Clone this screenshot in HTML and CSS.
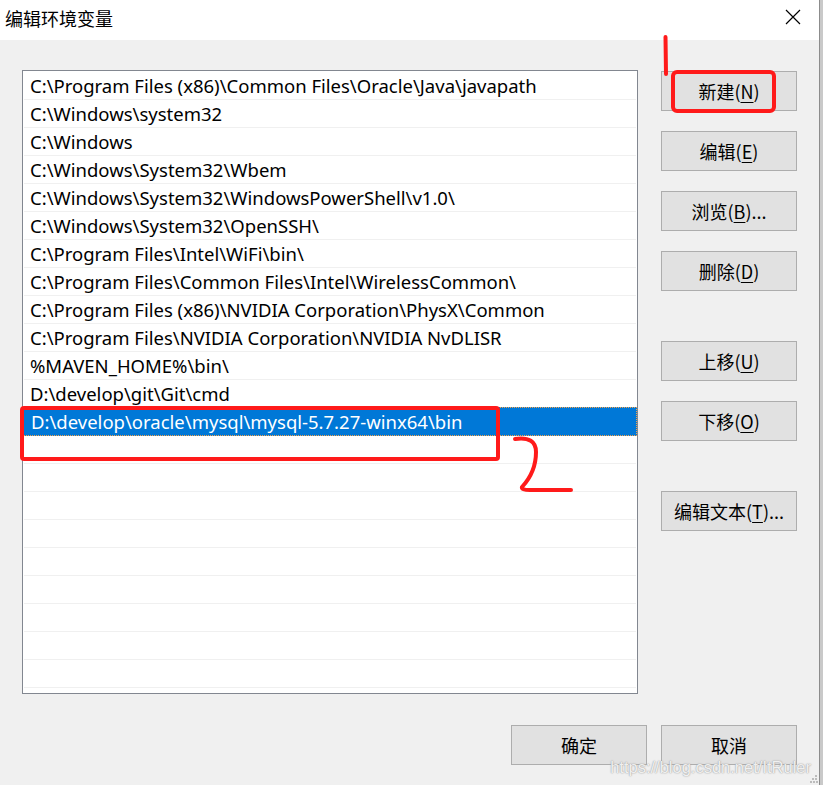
FILE: index.html
```html
<!DOCTYPE html>
<html lang="zh-CN">
<head>
<meta charset="utf-8">
<title>编辑环境变量</title>
<link rel="stylesheet" href="styles.css">
</head>
<body>
<div class="screen">
  <div class="dialog">
    <div class="titlebar">
      <span class="title">编辑环境变量</span>
      <span class="close">
        <svg width="16" height="16" viewBox="0 0 16 16"><path d="M1 1L15 15M15 1L1 15" stroke="#000" stroke-width="1.2" fill="none"/></svg>
      </span>
    </div>
    <div class="body">
      <div class="main">
        <div class="listbox">
          <div class="row">C:\Program Files (x86)\Common Files\Oracle\Java\javapath</div>
          <div class="row">C:\Windows\system32</div>
          <div class="row">C:\Windows</div>
          <div class="row">C:\Windows\System32\Wbem</div>
          <div class="row">C:\Windows\System32\WindowsPowerShell\v1.0\</div>
          <div class="row">C:\Windows\System32\OpenSSH\</div>
          <div class="row">C:\Program Files\Intel\WiFi\bin\</div>
          <div class="row">C:\Program Files\Common Files\Intel\WirelessCommon\</div>
          <div class="row">C:\Program Files (x86)\NVIDIA Corporation\PhysX\Common</div>
          <div class="row">C:\Program Files\NVIDIA Corporation\NVIDIA NvDLISR</div>
          <div class="row">%MAVEN_HOME%\bin\</div>
          <div class="row">D:\develop\git\Git\cmd</div>
          <div class="row selected">D:\develop\oracle\mysql\mysql-5.7.27-winx64\bin</div>
          <div class="row"></div>
          <div class="row"></div>
          <div class="row"></div>
          <div class="row"></div>
          <div class="row"></div>
          <div class="row"></div>
          <div class="row"></div>
          <div class="row"></div>
          <div class="row"></div>
        </div>
        <div class="side">
          <button class="btn">新建(<u>N</u>)</button>
          <button class="btn">编辑(<u>E</u>)</button>
          <button class="btn">浏览(<u>B</u>)...</button>
          <button class="btn">删除(<u>D</u>)</button>
          <button class="btn group">上移(<u>U</u>)</button>
          <button class="btn">下移(<u>O</u>)</button>
          <button class="btn group2">编辑文本(<u>T</u>)...</button>
        </div>
      </div>
      <div class="footer">
        <button class="btn">确定</button>
        <button class="btn">取消</button>
      </div>
      <div class="watermark">https://blog.csdn.net/ItRuler</div>
      <svg class="grip" width="8" height="8" viewBox="0 0 8 8">
        <rect x="5" y="0" width="2" height="2" fill="#bcbcbc"/>
        <rect x="2" y="3" width="2" height="2" fill="#bcbcbc"/>
        <rect x="5" y="3" width="2" height="2" fill="#bcbcbc"/>
        <rect x="0" y="6" width="2" height="2" fill="#bcbcbc"/>
        <rect x="3" y="6" width="2" height="2" fill="#bcbcbc"/>
        <rect x="6" y="6" width="2" height="2" fill="#bcbcbc"/>
      </svg>
    </div>
    <svg class="annot" width="819" height="785" viewBox="0 0 819 785">
      <path d="M665.5 37 L666 74" stroke="#ff1a1a" stroke-width="4" stroke-linecap="round" fill="none"/>
      <rect x="673" y="72" width="101" height="39" rx="4" ry="4" stroke="#ff1a1a" stroke-width="4" fill="none"/>
      <rect x="22" y="408" width="476" height="51" rx="2" ry="2" stroke="#ff1a1a" stroke-width="4" fill="none"/>
      <path d="M515 439 Q536 436 536 452 Q536 472 522 487 Q521 490 530 490 L571 490" stroke="#ff1a1a" stroke-width="4" stroke-linecap="round" stroke-linejoin="round" fill="none"/>
    </svg>
  </div>
  <div class="behind"></div>
</div>
</body>
</html>
```
FILE: styles.css
```css
html, body {
  margin: 0;
  padding: 0;
  background: #f0f0f0;
}
.screen {
  display: flex;
  width: 823px;
  height: 785px;
  overflow: hidden;
}
.dialog {
  position: relative;
  width: 819px;
  height: 785px;
  display: flex;
  flex-direction: column;
  font-family: "Noto Sans", "Noto Sans CJK SC", sans-serif;
}
.behind {
  width: 4px;
  height: 785px;
  background: #c9c9c9;
  border-left: 1px solid #8c8c8c;
  box-sizing: border-box;
}
.titlebar {
  height: 40px;
  background: #ffffff;
  display: flex;
  align-items: center;
  justify-content: space-between;
  padding: 0 18px 0 5px;
}
.title {
  font-family: "Noto Sans CJK SC", sans-serif;
  font-size: 18px;
  color: #000;
  margin-top: -4px;
}
.close {
  display: flex;
  margin-top: -6px;
}
.body {
  position: relative;
  flex: 1;
  background: #f0f0f0;
  padding: 30px 0 0 22px;
  display: flex;
  flex-direction: column;
}
.main {
  display: flex;
  gap: 23px;
}
.listbox {
  width: 616px;
  height: 624px;
  box-sizing: border-box;
  border: 1px solid #828790;
  background: #fff;
  padding-top: 1px;
}
.row {
  height: 28px;
  box-sizing: border-box;
  border-bottom: 1px solid #f0f0f0;
  margin: 0 1px;
  padding-left: 6px;
  font-size: 18.5px;
  line-height: 27px;
  color: #000;
  white-space: nowrap;
}
.row.selected {
  background: #0078d7;
  color: #fff;
  margin: -1px 0 0 0;
  height: 29px;
  padding-left: 7px;
  line-height: 28px;
  border: 1px dotted #f7a34a;
}
.side {
  display: flex;
  flex-direction: column;
  gap: 20px;
  padding-top: 1px;
}
.btn {
  width: 136px;
  height: 40px;
  box-sizing: border-box;
  background: #e1e1e1;
  border: 1px solid #adadad;
  font-family: "Noto Sans CJK SC", sans-serif;
  font-size: 18px;
  color: #000;
  padding: 0;
  margin: 0;
}
.btn u {
  text-decoration-thickness: 1px;
  text-underline-offset: 3px;
}
.btn.group {
  margin-top: 30px;
}
.btn.group2 {
  margin-top: 30px;
}
.footer {
  display: flex;
  justify-content: flex-end;
  gap: 14px;
  padding-right: 22px;
  margin-top: 31px;
}
.watermark {
  position: absolute;
  right: 8px;
  bottom: 8px;
  font-family: "Liberation Sans", Arial, sans-serif;
  font-size: 16.5px;
  color: rgba(255, 255, 255, 0.85);
  text-shadow: 0 0 1px #9a9a9a, 0 0 2px #b0b0b0;
}
.grip {
  position: absolute;
  right: 1px;
  bottom: 2px;
}
.annot {
  position: absolute;
  left: 0;
  top: 0;
  pointer-events: none;
}
```
